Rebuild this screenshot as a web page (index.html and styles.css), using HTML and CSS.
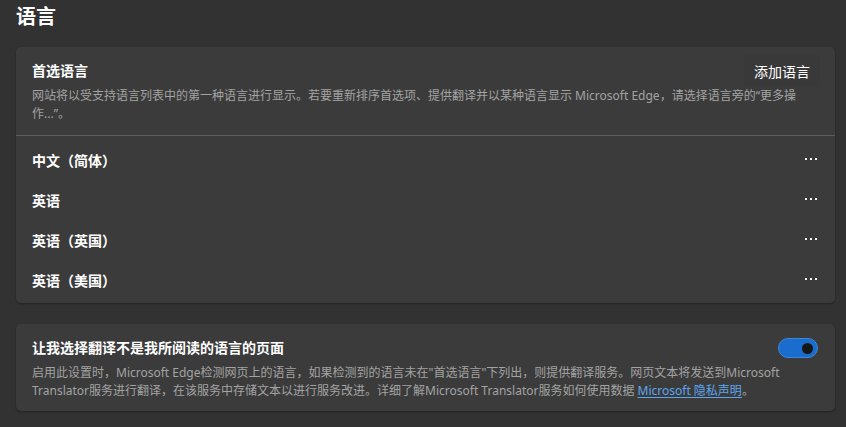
FILE: index.html
```html
<!DOCTYPE html>
<html lang="zh-CN">
<head>
    <meta charset="UTF-8">
    <meta name="viewport" content="width=device-width, initial-scale=1.0">
    <title>语言</title>
    <link rel="stylesheet" href="styles.css">
</head>
<body>
    <h1 class="page-title">语言</h1>

    <div class="card">
        <div class="card-head">
            <div class="head-row">
                <h2 class="card-title">首选语言</h2>
                <button class="add-button">添加语言</button>
            </div>
            <p class="desc">网站将以受支持语言列表中的第一种语言进行显示。若要重新排序首选项、提供翻译并以某种语言显示 Microsoft Edge，请选择语言旁的“更多操<br>作...”。</p>
        </div>
        <ul class="lang-list">
            <li class="lang-row"><span>中文（简体）</span><button class="more-button" aria-label="更多操作"><span></span><span></span><span></span></button></li>
            <li class="lang-row"><span>英语</span><button class="more-button" aria-label="更多操作"><span></span><span></span><span></span></button></li>
            <li class="lang-row"><span>英语（英国）</span><button class="more-button" aria-label="更多操作"><span></span><span></span><span></span></button></li>
            <li class="lang-row"><span>英语（美国）</span><button class="more-button" aria-label="更多操作"><span></span><span></span><span></span></button></li>
        </ul>
    </div>

    <div class="card translate-card">
        <div class="head-row toggle-row">
            <h2 class="card-title">让我选择翻译不是我所阅读的语言的页面</h2>
            <div class="toggle on"><div class="knob"></div></div>
        </div>
        <p class="desc">启用此设置时，Microsoft Edge检测网页上的语言，如果检测到的语言未在"首选语言"下列出，则提供翻译服务。网页文本将发送到Microsoft Translator服务进行翻译，在该服务中存储文本以进行服务改进。详细了解Microsoft Translator服务如何使用数据 <a href="#" class="link">Microsoft 隐私声明</a>。</p>
    </div>
</body>
</html>
```

FILE: styles.css
```css
body {
    margin: 0;
    padding: 0 11px 0 16px;
    background-color: #323232;
    color: #fff;
    font-family: "Noto Sans", "Noto Sans CJK SC", sans-serif;
}
.page-title {
    margin: 0 0 13px;
    font-size: 20px;
    line-height: 34px;
    font-weight: 700;
}
.card {
    background-color: #3b3b3b;
    border-radius: 5px;
    box-shadow: 0 1px 2px rgba(0, 0, 0, 0.35);
    margin-bottom: 21px;
}
.card-head {
    padding: 8px 16px 12px;
    border-bottom: 1px solid #5e5e5e;
}
.head-row {
    display: flex;
    justify-content: space-between;
    align-items: center;
}
.card-title {
    margin: 0;
    font-size: 14px;
    line-height: 20px;
    font-weight: 700;
}
.add-button {
    height: 32px;
    padding: 0 10px;
    margin-right: -1px;
    background-color: #393939;
    border: none;
    border-radius: 4px;
    color: #fff;
    font-family: inherit;
    font-size: 14px;
    cursor: pointer;
}
.desc {
    margin: 0;
    font-size: 12px;
    line-height: 18px;
    color: #a3a3a3;
}
.lang-list {
    list-style: none;
    margin: 0;
    padding: 4px 0 3px;
}
.lang-row {
    display: flex;
    justify-content: space-between;
    align-items: center;
    height: 40px;
    padding: 0 8px 0 16px;
    font-size: 14px;
    font-weight: 700;
}
.more-button {
    display: flex;
    align-items: center;
    justify-content: center;
    gap: 3px;
    width: 32px;
    height: 32px;
    padding: 0 0 3px;
    background: none;
    border: none;
    cursor: pointer;
}
.more-button span {
    width: 2px;
    height: 2px;
    background-color: #fff;
}
.translate-card {
    padding: 14px 16px 11px;
}
.toggle-row {
    margin-bottom: 6px;
}
.toggle {
    box-sizing: border-box;
    width: 40px;
    height: 20px;
    margin-right: 1px;
    border-radius: 10px;
    background-color: #1a6dcc;
    border: 1px solid #3b88de;
    display: flex;
    align-items: center;
    justify-content: flex-end;
    padding-right: 4px;
}
.knob {
    width: 11px;
    height: 11px;
    border-radius: 50%;
    background-color: #161616;
}
.link {
    color: #5ba6ee;
    text-decoration: underline;
    text-underline-offset: 2px;
}
```
